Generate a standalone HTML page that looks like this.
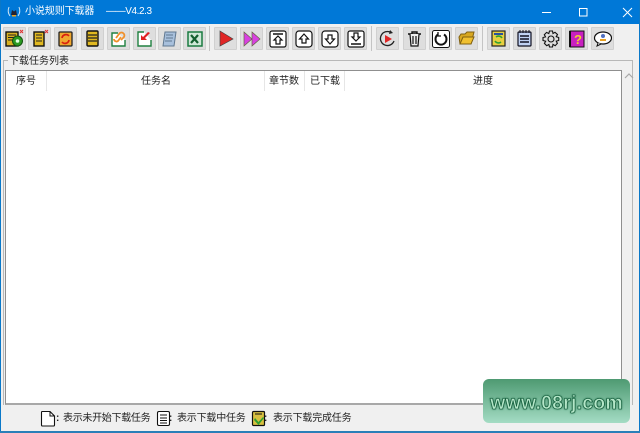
<!DOCTYPE html>
<html lang="zh"><head><meta charset="utf-8"><style>
html,body{margin:0;padding:0;width:640px;height:433px;overflow:hidden;background:#f0f0f0;font-family:"Liberation Sans","Noto Sans CJK SC",sans-serif;color:#222}
#w{position:absolute;left:0;top:0;width:640px;height:433px;filter:blur(.3px)}
.a{position:absolute}
.t{position:absolute;font-size:10px;line-height:12px;white-space:nowrap}
.b{position:absolute;top:27px;width:23px;height:23px;background:#dedede;border:1px solid #d0d0d0;box-sizing:border-box;border-radius:1px}
.b svg{position:absolute;left:1px;top:1px;width:19px;height:19px}
.sep{position:absolute;top:26px;width:1px;height:25px;background:#c4c4c4}
.h{position:absolute;top:71px;width:1px;height:20px;background:#e6e6e6}
</style></head><body><div id="w">
<div class="a" style="left:0;top:0;width:640px;height:24px;background:#0078d7"></div>
<div class="a" style="left:0;top:0;width:1px;height:433px;background:#0a78c8"></div>
<div class="a" style="left:639px;top:0;width:1px;height:433px;background:#0a78c8"></div>
<div class="a" style="left:0;top:431px;width:640px;height:2px;background:#2a7fb8"></div>
<svg class="a" style="left:6px;top:4px" width="16" height="16" viewBox="0 0 16 16"><path d="M3 3Q1 8 4 12M13 3Q15 8 12 12" fill="none" stroke="#cfe6f7" stroke-width="1"/><path d="M5 11L6 6L8 7.5L10 6L11 11Z" fill="#223"/><path d="M6 11h4v1.500H6z" fill="#e8a020"/></svg>
<div class="t" style="left:25px;top:6px;color:#fff;letter-spacing:-.1px">小说规则下载器</div>
<div class="t" style="left:106px;top:6px;color:#fff;letter-spacing:-.4px">——V4.2.3</div>
<svg class="a" style="left:540px;top:6px" width="96" height="12" viewBox="0 0 96 12" fill="none" stroke="#fff" stroke-width="1"><path d="M2 6.500H11"/><rect x="39.500" y="2.500" width="7.500" height="7.500"/><path d="M83 2L92 11M92 2L83 11"/></svg>

<div class="b" style="left:3px"><svg viewBox="0 0 19 19"><rect x="1" y="3" width="12" height="14" fill="#d8b020" stroke="#111" stroke-width="1.400"/><path d="M3 6h8M3 8.500h8M3 11h8" stroke="#222"/><circle cx="12.500" cy="12" r="5" fill="#2a9a20" stroke="#145010"/><circle cx="12.500" cy="12" r="1.800" fill="#dfd"/><path d="M15 1l3 3M18 1l-3 3" stroke="#e03030"/></svg></div>
<div class="b" style="left:28px"><svg viewBox="0 0 19 19"><rect x="4" y="3" width="10" height="14" fill="#e0b820" stroke="#111" stroke-width="1.400"/><path d="M6 6h6M6 9h6M6 12h6" stroke="#222"/><path d="M15 1l3 3M18 1l-3 3" stroke="#e03030"/></svg></div>
<div class="b" style="left:54px"><svg viewBox="0 0 19 19"><rect x="3" y="3" width="13" height="14" rx="1" fill="#f0a830" stroke="#222" stroke-width="1.300"/><path d="M6 9a4 4 0 0 1 7-2M13 11a4 4 0 0 1-7 2" fill="none" stroke="#d82010" stroke-width="1.700"/></svg></div>
<div class="b" style="left:81px"><svg viewBox="0 0 19 19"><rect x="4" y="2" width="11" height="15" rx="1" fill="#e0b820" stroke="#111" stroke-width="1.400"/><path d="M5 6h9M5 9h9M5 12h9" stroke="#222" stroke-width="1.200"/></svg></div>
<div class="b" style="left:107px"><svg viewBox="0 0 19 19"><path d="M9 4H3v13h13v-6" fill="#fff" stroke="#208040" stroke-width="1.400"/><path d="M7 9l3-4a2.500 2.500 0 0 1 5 3l-3 3M12 8l-3 4a2.500 2.500 0 0 1-4-2" fill="none" stroke="#f0902a" stroke-width="1.800"/></svg></div>
<div class="b" style="left:133px"><svg viewBox="0 0 19 19"><path d="M9 3H3v14h13v-6" fill="#fff" stroke="#208040" stroke-width="1.400"/><path d="M15 4l-5 5 2 2H6V6l2 2 5-5z" fill="#e02020"/></svg></div>
<div class="b" style="left:158px"><svg viewBox="0 0 19 19"><path d="M5 3h11l-2 14H3z" fill="#a8c0dc" stroke="#607890"/><path d="M6 6h7M6 9h7M5 12h7" stroke="#607890"/></svg></div>
<div class="b" style="left:183px"><svg viewBox="0 0 19 19"><rect x="3" y="3" width="14" height="14" fill="#cfe8d8" stroke="#1a7a40" stroke-width="1.500"/><path d="M6 6l7 8M13 6l-7 8" stroke="#146030" stroke-width="2.200"/></svg></div>
<div class="sep" style="left:209px"></div>
<div class="b" style="left:214px"><svg viewBox="0 0 19 19"><path d="M4 2L17 10L4 17Z" fill="#e02525" stroke="#444" stroke-width=".7"/></svg></div>
<div class="b" style="left:240px"><svg viewBox="0 0 19 19"><path d="M2 3L10 10L2 17ZM10 3L18 10L10 17Z" fill="#d840e0" stroke="#664" stroke-width=".7"/></svg></div>
<div class="b" style="left:266px"><svg viewBox="0 0 19 19" fill="#fff" stroke="#111" stroke-width="1.200"><rect x="2" y="2" width="16" height="16" rx="2"/><path d="M5 5h10" stroke-width="1.500"/><path d="M10 7l4 4h-2v4H8v-4H6z"/></svg></div>
<div class="b" style="left:292px"><svg viewBox="0 0 19 19" fill="#fff" stroke="#111" stroke-width="1.200"><rect x="2" y="2" width="16" height="16" rx="3"/><path d="M10 5l4.500 5H12v4H8v-4H5.500z"/></svg></div>
<div class="b" style="left:318px"><svg viewBox="0 0 19 19" fill="#fff" stroke="#111" stroke-width="1.200"><rect x="2" y="2" width="16" height="16" rx="3"/><path d="M10 15l4.500-5H12V6H8v4H5.500z"/></svg></div>
<div class="b" style="left:344px"><svg viewBox="0 0 19 19" fill="#fff" stroke="#111" stroke-width="1.200"><rect x="2" y="2" width="16" height="16" rx="2"/><path d="M10 12l4-4h-2V4H8v4H6z"/><path d="M5 15h10" stroke-width="1.500"/></svg></div>
<div class="sep" style="left:371px"></div>
<div class="b" style="left:376px"><svg viewBox="0 0 19 19"><path d="M13 3.500A7 7 0 1 0 16 12" fill="none" stroke="#222" stroke-width="1.300"/><path d="M12 1l3 3-4 1z" fill="#222"/><path d="M7 6l7 4-7 4z" fill="#e02525"/></svg></div>
<div class="b" style="left:403px"><svg viewBox="0 0 19 19" fill="none" stroke="#111" stroke-width="1.200"><path d="M3 5h13M7 5V3h5v2" stroke-width="1.400"/><path d="M5 5l1 12h7l1-12" fill="#eee"/><path d="M8 7v8M11 7v8"/></svg></div>
<div class="b" style="left:429px"><svg viewBox="0 0 19 19" fill="none" stroke="#111"><rect x="1.500" y="1.500" width="17" height="17" rx="2" fill="#fff"/><path d="M7 5.500A5.500 5.500 0 1 0 13 5.500" stroke-width="2"/><path d="M7 3v4H10" stroke-width="1.300"/></svg></div>
<div class="b" style="left:455px"><svg viewBox="0 0 19 19"><path d="M2 8l2-3h4l2-2h7l-3 12H3z" fill="#d8a820" stroke="#806010"/><path d="M6 8h11l-3 7H3z" fill="#f0c030" stroke="#806010"/></svg></div>
<div class="sep" style="left:482px"></div>
<div class="b" style="left:487px"><svg viewBox="0 0 19 19"><rect x="3" y="2" width="13" height="15" fill="#e8d040" stroke="#222" stroke-width="1.200"/><path d="M5 5h9" stroke="#2850a0" stroke-width="2"/><path d="M7 8a4 4 0 0 1 6 1M12 13a4 4 0 0 1-6-1" fill="none" stroke="#30a030" stroke-width="1.600"/></svg></div>
<div class="b" style="left:513px"><svg viewBox="0 0 19 19"><rect x="3" y="3" width="13" height="14" rx="1" fill="#c0d2f4" stroke="#112" stroke-width="1.200"/><path d="M5 7h9M5 10h9M5 13h9" stroke="#112" stroke-width="1.400"/><path d="M5 1v3M8 1v3M11 1v3M14 1v3" stroke="#112"/></svg></div>
<div class="b" style="left:539px"><svg viewBox="0 0 19 19" fill="none" stroke="#111" stroke-width="1.100"><circle cx="10" cy="10" r="3"/><path d="M8.500 2h3l.5 2.500 2-1.200 2.500 2.200-1.300 2.200 2.500.8v3l-2.500.6 1.200 2.200-2.200 2.400-2.200-1.300-.5 2.600h-3l-.6-2.500-2.200 1.200-2.300-2.300 1.300-2.200L2 11.500v-3l2.500-.6-1.200-2.200 2.300-2.300 2.200 1.200z"/></svg></div>
<div class="b" style="left:565px"><svg viewBox="0 0 19 19"><rect x="3" y="2" width="14" height="16" fill="#c820c0" stroke="#111"/><path d="M3 2v16" stroke="#111" stroke-width="2"/><text x="7" y="15" font-size="13" font-weight="bold" fill="#f0d030" font-family="Liberation Sans">?</text></svg></div>
<div class="b" style="left:591px"><svg viewBox="0 0 19 19"><ellipse cx="10" cy="9" rx="8.500" ry="6" fill="#fff" stroke="#111" stroke-width="1.200"/><path d="M5 14l-1 3 4-2" fill="#fff" stroke="#111"/><circle cx="10" cy="7" r="2" fill="#5070c0"/><path d="M7 10h6v2H7z" fill="#e8a020"/></svg></div>

<div class="a" style="left:3px;top:60px;width:630px;height:345px;border:1px solid #b8b8b8;border-bottom:none;box-sizing:border-box"></div>
<div class="t" style="left:8px;top:56px;background:#f0f0f0;padding:0 1px">下载任务列表</div>
<div class="a" style="left:5px;top:70px;width:617px;height:335px;background:#fff;border:1px solid #8f8f8f;border-bottom:2px solid #a8a8a8;box-sizing:border-box"></div>
<svg class="a" style="left:624px;top:72px" width="10" height="8" viewBox="0 0 10 8"><path d="M1 6l4-4 4 4" fill="none" stroke="#a8a8a8" stroke-width="1.200"/></svg>
<div class="t" style="left:16px;top:76px">序号</div>
<div class="t" style="left:141px;top:76px">任务名</div>
<div class="t" style="left:269px;top:76px">章节数</div>
<div class="t" style="left:310px;top:76px">已下载</div>
<div class="t" style="left:473px;top:76px">进度</div>
<div class="h" style="left:46px"></div><div class="h" style="left:264px"></div><div class="h" style="left:304px"></div><div class="h" style="left:344px"></div>

<svg class="a" style="left:40px;top:410px" width="17" height="17" viewBox="0 0 17 17"><path d="M2 1.500h8l4.500 4.500v9a1 1 0 0 1-1 1h-11a1 1 0 0 1-1-1V2.500a1 1 0 0 1 .500-1z" fill="#fff" stroke="#111" stroke-width="1.100"/><path d="M10 1.500V6h4.500" fill="none" stroke="#111"/></svg>
<div class="t" style="left:56px;top:413px;font-weight:bold">:</div>
<div class="t" style="left:63px;top:413px;letter-spacing:-.3px">表示未开始下载任务</div>
<svg class="a" style="left:156px;top:410px" width="16" height="17" viewBox="0 0 16 17"><rect x="1.500" y="1.500" width="12" height="14" rx="1.500" fill="#fff" stroke="#111" stroke-width="1.100"/><path d="M4 5h7M4 8h7M4 10.500h7M4 13h7" stroke="#111"/></svg>
<div class="t" style="left:169px;top:413px;font-weight:bold">:</div>
<div class="t" style="left:177px;top:413px;letter-spacing:-.2px">表示下载中任务</div>
<svg class="a" style="left:251px;top:410px" width="16" height="17" viewBox="0 0 16 17"><rect x="1.500" y="1.500" width="12" height="14" rx="1" fill="#d8c040" stroke="#111" stroke-width="1.200"/><path d="M3 10l4.500 5L13 8l-1-1-4.500 5L4 8z" fill="#30a030"/><path d="M4 4h7" stroke="#111"/></svg>
<div class="t" style="left:264px;top:413px;font-weight:bold">:</div>
<div class="t" style="left:273px;top:413px;letter-spacing:-.2px">表示下载完成任务</div>

<div class="a" style="left:483px;top:379px;width:147px;height:44px;border-radius:6px;background:linear-gradient(#4e9a72,#a4dcc4)"></div>
<div class="a" style="left:483px;top:392px;width:147px;text-align:center;font-size:19.500px;line-height:22px;font-weight:bold;font-family:'Liberation Sans',sans-serif;color:#b4e6c8;-webkit-text-stroke:.6px #0f5a38;text-shadow:0 0 2px #0f5a38,0 0 1px #0f5a38;white-space:nowrap;letter-spacing:.2px">www.08rj.com</div>
</div></body></html>
